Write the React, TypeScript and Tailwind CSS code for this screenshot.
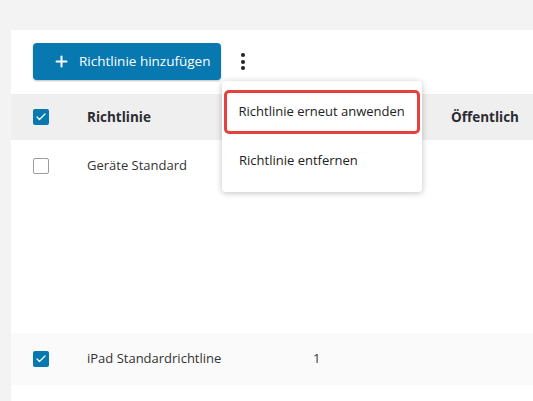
import { Plus, Check } from 'lucide-react';

interface Policy {
  id: number;
  name: string;
  count?: string;
  checked: boolean;
  shaded?: boolean;
}

const policies: Policy[] = [
  { id: 1, name: 'Geräte Standard', checked: false },
  { id: 2, name: 'iPad Standardrichtline', count: '1', checked: true, shaded: true },
];

function Checkbox({ checked }: { checked: boolean }) {
  if (checked) {
    return (
      <span className="flex h-4 w-4 items-center justify-center rounded-[2px] bg-[#0778b0]">
        <Check className="h-3 w-3 text-white" strokeWidth={2.5} />
      </span>
    );
  }
  return <span className="block h-4 w-4 rounded-[2px] border-[1.5px] border-[#9b9b9b] bg-white" />;
}

export default function App() {
  return (
    <div className="h-[401px] w-[533px] overflow-hidden bg-[#f3f3f3] pl-[11px] pt-[30px] font-['Open_Sans','Noto_Sans',sans-serif] text-[#333]">
      <div className="relative h-full bg-white">
        {/* toolbar */}
        <div className="flex h-[64px] items-start gap-[14px] pl-[22px] pt-[13px]">
          <button className="flex h-[37px] w-[188px] items-center gap-[9px] rounded-[4px] bg-[#0778b0] pl-[20px] text-[13.5px] text-white shadow-[0_1px_2px_rgba(0,0,0,0.25)]">
            <Plus className="h-[17px] w-[17px]" strokeWidth={2.8} />
            Richtlinie hinzufügen
          </button>
          <button className="flex h-[37px] w-[16px] flex-col items-center justify-center gap-[2.5px]">
            <span className="h-[4px] w-[4px] rounded-full bg-[#222]" />
            <span className="h-[4px] w-[4px] rounded-full bg-[#222]" />
            <span className="h-[4px] w-[4px] rounded-full bg-[#222]" />
          </button>
        </div>

        {/* table header */}
        <div className="flex h-[46px] items-center bg-[#efefef] text-[13.5px] font-bold text-[#2b2b33]">
          <div className="w-[76px] pl-[22px]">
            <Checkbox checked />
          </div>
          <div className="w-[364px]">Richtlinie</div>
          <div>Öffentlich</div>
        </div>

        {/* rows */}
        {policies.map((p, i) => (
          <div key={p.id}>
            <div className={`flex h-[52px] items-center text-[13px] ${p.shaded ? 'bg-[#fafafa]' : 'bg-white'}`}>
              <div className="w-[76px] pl-[22px]">
                <Checkbox checked={p.checked} />
              </div>
              <div className="w-[226px]">{p.name}</div>
              <div>{p.count}</div>
            </div>
            {i === 0 && <div className="h-[141px]" />}
          </div>
        ))}

        {/* dropdown menu */}
        <div className="absolute left-[211px] top-[51px] w-[200px] rounded-[4px] bg-white pb-[4px] pt-[9px] shadow-[0_1px_6px_rgba(0,0,0,0.25)]">
          <div className="mx-[2px] flex h-[44px] items-center rounded-[5px] border-[3.5px] border-[#e8403f] pl-[11.5px] text-[13px] text-[#222]">
            Richtlinie erneut anwenden
          </div>
          <div className="flex h-[54px] items-center pl-[17px] text-[13px] text-[#222]">
            Richtlinie entfernen
          </div>
        </div>
      </div>
    </div>
  );
}
